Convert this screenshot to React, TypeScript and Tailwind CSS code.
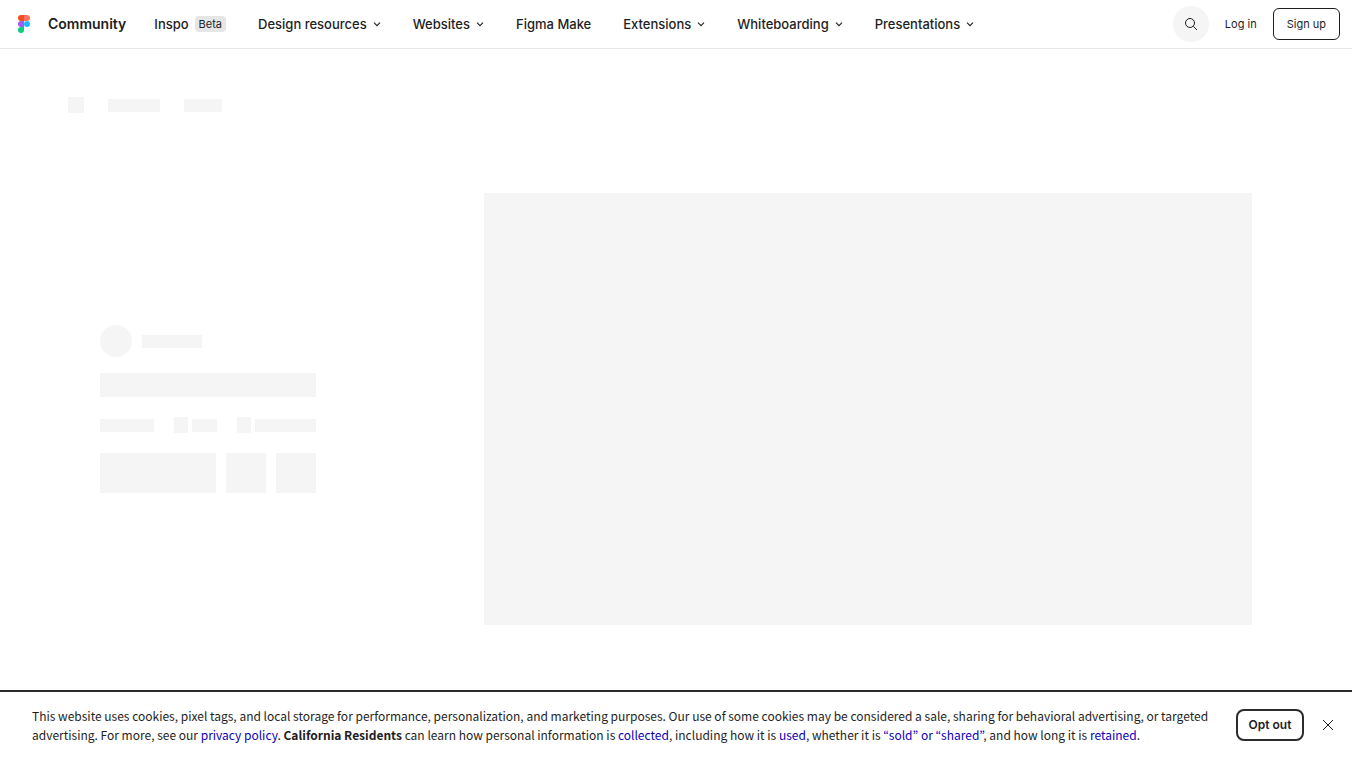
import type { ReactNode } from 'react';

interface INavItemProps {
  label: string;
  badge?: string;
  menu?: boolean;
}

interface IBoneProps {
  className: string;
}

const navItems: INavItemProps[] = [
  { label: 'Inspo', badge: 'Beta' },
  { label: 'Design resources', menu: true },
  { label: 'Websites', menu: true },
  { label: 'Figma Make' },
  { label: 'Extensions', menu: true },
  { label: 'Whiteboarding', menu: true },
  { label: 'Presentations', menu: true },
];

const Logo = () => (
  <svg width="12" height="18" viewBox="0 0 12 18" aria-hidden="true">
    <path fill="#f24e1e" d="M3 0h3v6H3a3 3 0 0 1 0-6z" />
    <path fill="#ff7262" d="M6 0h3a3 3 0 0 1 0 6H6z" />
    <path fill="#a259ff" d="M3 6h3v6H3a3 3 0 0 1 0-6z" />
    <circle fill="#1abcfe" cx="9" cy="9" r="3" />
    <path fill="#0acf83" d="M3 12h3v3a3 3 0 1 1-3-3z" />
  </svg>
);

const Chevron = () => (
  <svg width="8" height="8" viewBox="0 0 8 8" fill="none" aria-hidden="true">
    <path d="M1 2.6 4 5.6 7 2.6" stroke="currentColor" strokeWidth="1.1" />
  </svg>
);

const NavItem = ({ label, badge, menu = false }: INavItemProps) => {
  if (menu) {
    return (
      <button type="button" className="flex items-center gap-1.5">
        {label}
        <Chevron />
      </button>
    );
  }

  return (
    <a href="#" className="flex items-center gap-1.5">
      {label}
      {badge && (
        <span className="rounded bg-[#e6e6e6] px-1 text-[11px] leading-4 font-normal">
          {badge}
        </span>
      )}
    </a>
  );
};

const Header = () => (
  <header className="flex h-[49px] items-center border-b border-[#e6e6e6] pr-3 pl-[18px]">
    <a href="#" className="flex items-center gap-[18px] text-[14px] leading-[22px] font-semibold">
      <Logo />
      Community
    </a>

    <nav className="ml-7 flex items-center gap-8 text-[13px] leading-[22px] font-medium whitespace-nowrap">
      {navItems.map((item) => (
        <NavItem key={item.label} {...item} />
      ))}
    </nav>

    <div className="ml-auto flex items-center gap-4 text-[11px] whitespace-nowrap">
      <button
        type="button"
        aria-label="Search"
        className="flex size-9 items-center justify-center rounded-full bg-[#f5f5f5]"
      >
        <svg width="14" height="14" viewBox="0 0 14 14" fill="none" aria-hidden="true">
          <circle cx="6" cy="6" r="4.5" stroke="currentColor" />
          <path d="m9.3 9.3 3.7 3.7" stroke="currentColor" />
        </svg>
      </button>
      <a href="#">Log in</a>
      <button type="button" className="h-8 rounded-md border border-[#1e1e1e] px-[13px]">
        Sign up
      </button>
    </div>
  </header>
);

const Bone = ({ className }: IBoneProps) => <div className={`bg-[#f5f5f5] ${className}`} />;

const Skeleton = () => (
  <main className="pt-12">
    <div className="flex items-center gap-6 px-[68px]">
      <Bone className="size-4" />
      <Bone className="h-[13px] w-[52px]" />
      <Bone className="h-[13px] w-[38px]" />
    </div>

    <div className="mt-20 flex items-center justify-between px-[100px]">
      <div className="w-[216px]">
        <div className="flex items-center gap-2.5">
          <Bone className="size-8 rounded-full" />
          <Bone className="h-[13px] w-[60px]" />
        </div>
        <Bone className="mt-4 h-6" />
        <div className="mt-5 flex items-center justify-between">
          <Bone className="h-[13px] w-[54px]" />
          <div className="flex items-center gap-1">
            <Bone className="h-4 w-3.5" />
            <Bone className="h-[13px] w-[25px]" />
          </div>
          <div className="flex items-center gap-1">
            <Bone className="h-4 w-3.5" />
            <Bone className="h-[13px] w-[61px]" />
          </div>
        </div>
        <div className="mt-5 flex gap-2.5">
          <Bone className="h-10 flex-1" />
          <Bone className="size-10" />
          <Bone className="size-10" />
        </div>
      </div>
      <Bone className="aspect-video w-2/3" />
    </div>
  </main>
);

const PolicyLink = ({ children }: { children: ReactNode }) => (
  <a href="#" className="text-[#0d00b8]">
    {children}
  </a>
);

const CookieBanner = () => (
  <section
    aria-label="Cookies"
    className="fixed inset-x-0 bottom-0 flex items-center border-t-2 border-[#2c2c2c] bg-white pt-3.5 pr-4 pb-4 pl-8"
  >
    <p
      lang="en"
      className="flex-1 pr-5 font-['Noto_Sans_CJK_KR',sans-serif] text-[12px] leading-[19px]"
    >
      This website uses cookies, pixel tags, and local storage for performance, personalization, and
      marketing purposes. Our use of some cookies may be considered a sale, sharing for behavioral
      advertising, or targeted advertising. For more, see our{' '}
      <PolicyLink>privacy policy</PolicyLink>.{' '}
      <strong className="font-bold">California Residents</strong> can learn how personal information
      is <PolicyLink>collected</PolicyLink>, including how it is <PolicyLink>used</PolicyLink>,
      whether it is <PolicyLink>“sold” or “shared”</PolicyLink>, and how long it is{' '}
      <PolicyLink>retained</PolicyLink>.
    </p>
    <button
      type="button"
      className="h-8 w-[68px] rounded-lg border-2 border-[#2c2c2c] text-[12px] font-semibold"
    >
      Opt out
    </button>
    <button type="button" aria-label="Close" className="ml-4 flex size-4 items-center justify-center">
      <svg width="12" height="12" viewBox="0 0 12 12" fill="none" aria-hidden="true">
        <path d="m1 1 10 10M11 1 1 11" stroke="currentColor" />
      </svg>
    </button>
  </section>
);

export default function App() {
  return (
    <div className="min-h-screen bg-white font-['Inter',sans-serif] text-[#1e1e1e]">
      <Header />
      <Skeleton />
      <CookieBanner />
    </div>
  );
}
